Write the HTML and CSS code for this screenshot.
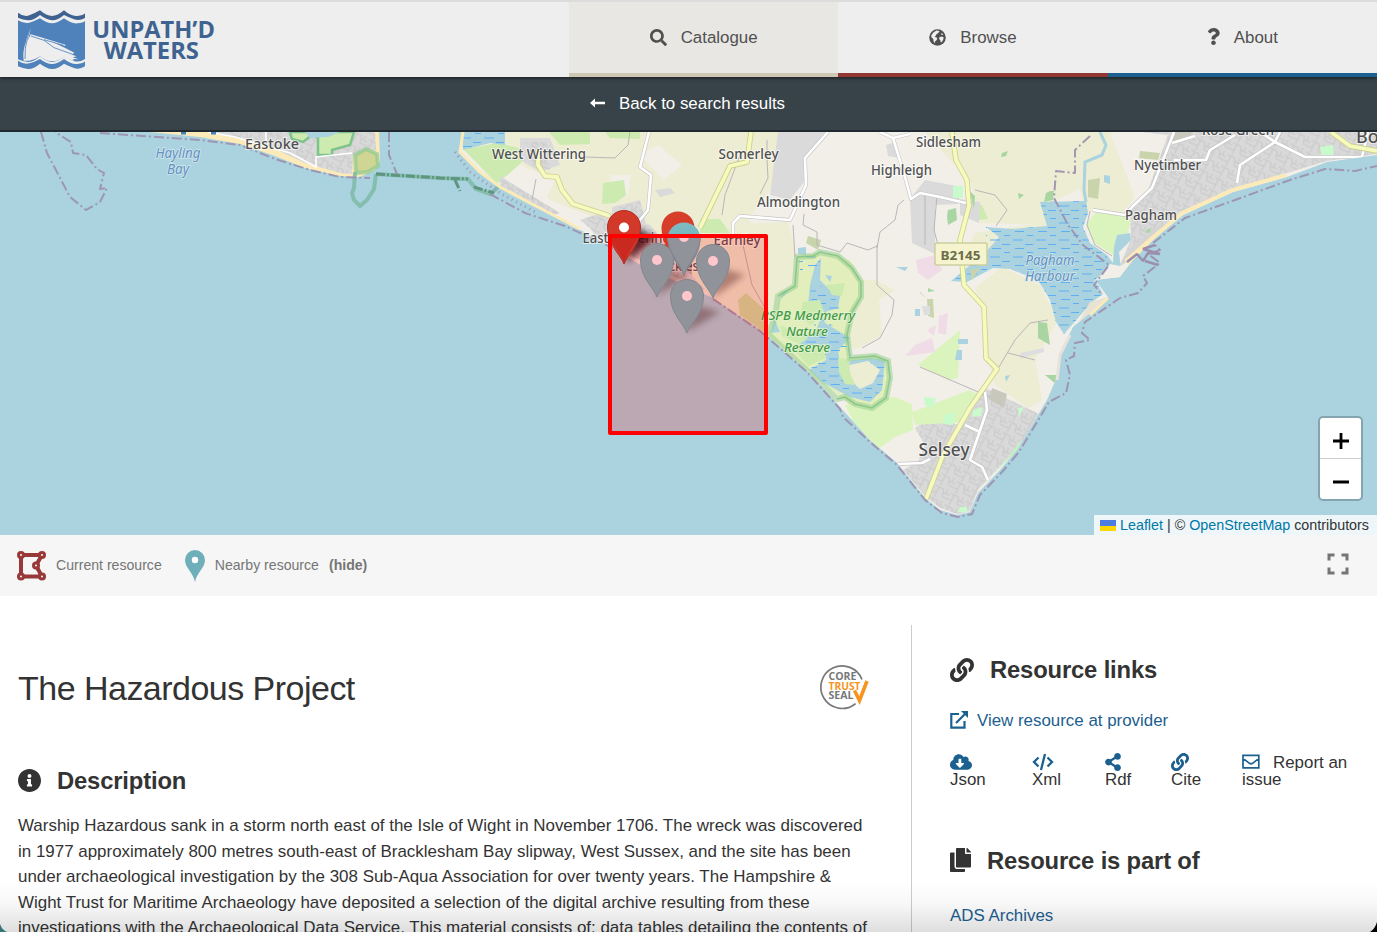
FILE: index.html
```html
<!DOCTYPE html>
<html lang="en">
<head>
<meta charset="utf-8">
<title>The Hazardous Project - Unpath'd Waters</title>
<link rel="stylesheet" href="styles.css">
</head>
<body>
<header class="topbar">
  <a class="logo">
    <svg width="222" height="77" viewBox="0 0 666 231">
      <path fill="#3f6391" d="M54 38Q72 52 88 46T120 31Q140 48 156 48T192 31Q214 50 232 48T255 40V54Q238 64 222 58T192 45Q172 62 156 61T120 45Q100 62 84 61T54 53Z"/>
      <path fill="#4f81bb" d="M54 61Q72 72 88 68T120 55Q140 70 156 70T192 55Q214 72 232 70T255 63V177Q238 188 222 183T192 169Q172 187 156 186T120 169Q100 187 84 186T54 178Z"/>
      <path fill="#eee" d="M93 86Q84 98 78 125Q67 155 71 182H88Q108 178 120 169Q138 184 156 184T192 170Q206 180 222 182L219 177L236 178L218 172L230 169L216 164L223 158L197 145L160 127L196 138V134L130 114L92 103L83 122Z"/>
      <path class="line" stroke="#4f81bb" stroke-width="2.500" d="M92 90Q86 98 83 112Q73 145 75 177M92 108L132 121L162 143L218 163M132 119L190 136"/>
      <path fill="#4f81bb" d="M54 182Q72 194 88 190T120 177Q140 192 156 192T192 177Q214 194 232 192T255 184V199Q238 210 222 204T192 191Q172 208 156 207T120 191Q100 208 84 207T54 199Z"/>
      <text class="logo-text" x="277" y="113" textLength="368" lengthAdjust="spacingAndGlyphs">UNPATH’D</text>
      <text class="logo-text" x="311" y="177" textLength="286" lengthAdjust="spacingAndGlyphs">WATERS</text>
    </svg>
  </a>
  <nav class="nav">
    <a class="nav-item catalogue"><svg width="17" height="17" viewBox="0 0 512 512"><path d="M505 442.700L405.300 343c-4.500-4.500-10.600-7-17-7H372c27.600-35.300 44-79.700 44-128C416 93.100 322.900 0 208 0S0 93.100 0 208s93.100 208 208 208c48.300 0 92.700-16.400 128-44v16.300c0 6.400 2.500 12.500 7 17l99.700 99.700c9.400 9.400 24.600 9.400 33.900 0l28.300-28.300c9.400-9.400 9.400-24.600.1-34zM208 336c-70.700 0-128-57.200-128-128 0-70.700 57.200-128 128-128 70.700 0 128 57.200 128 128 0 70.700-57.200 128-128 128z"/></svg><span>Catalogue</span></a>
    <a class="nav-item browse"><svg width="17" height="17" viewBox="0 0 17 17"><circle cx="8.500" cy="8.500" r="8.300"/><path class="continent" d="M7.500 1.600L10.500 1.900 9.300 4 7.400 5.200 6.800 6.800 5.600 7.400 8.200 9 7.800 11 6.200 12.200 5.600 14.400 4.500 12 4.300 10 2.400 8.300 2.300 6.200 4.600 3.200ZM10.200 8.500L12.200 7.400 14.600 8.300 14.300 10.500 12.700 13.300 11.600 13 11.300 11 10.200 10.200ZM12.200 4.200L13.400 4.500 14.200 6 12.600 6.100Z"/></svg><span>Browse</span></a>
    <a class="nav-item about"><svg width="13" height="17" viewBox="0 0 384 512"><path d="M202.021 0C122.202 0 70.503 32.703 29.914 91.026c-7.363 10.580-5.093 25.086 5.178 32.874l43.138 32.709c10.373 7.865 25.132 6.026 33.253-4.148 25.049-31.381 43.630-49.449 82.757-49.449 30.764 0 68.816 19.799 68.816 49.631 0 22.552-18.617 34.134-48.993 51.164-35.423 19.860-82.299 44.576-82.299 106.405V320c0 13.255 10.745 24 24 24h72.471c13.255 0 24-10.745 24-24v-5.773c0-42.860 125.268-44.645 125.268-160.627C377.504 66.256 286.902 0 202.021 0zM192 373.459c-38.196 0-69.271 31.075-69.271 69.271 0 38.195 31.075 69.270 69.271 69.270s69.271-31.075 69.271-69.271-31.075-69.270-69.271-69.270z"/></svg><span>About</span></a>
  </nav>
</header>
<div class="backbar"><svg width="15" height="10" viewBox="0 0 15 10"><path d="M0 5L5 .5V3.700H15V6.300H5V9.500Z"/></svg><span>Back to search results</span></div>

<section class="map">
<svg class="map-canvas" width="1377" height="403" viewBox="0 132 1377 403">
  <defs>
    <pattern id="streets" width="17" height="13" patternUnits="userSpaceOnUse" patternTransform="rotate(28)"><rect width="17" height="13" fill="#dad9d9"/><path d="M0 2H9L11 9H17M4 2V13M10 5H17M13 0V5M0 9L4 8" stroke="#c9c7c8" stroke-width="1" class="line"/></pattern>
    <pattern id="marsh" width="23" height="17" patternUnits="userSpaceOnUse"><path d="M1 2h10M13 6.500h8M3 10.500h9M15 14.500h6" stroke="#5fb0f2" stroke-width="1.200"/></pattern>
    <linearGradient id="pinTeal" x1="0" y1="0" x2="0" y2="1"><stop offset="0" stop-color="#7fbcc3"/><stop offset="1" stop-color="#62a4b4"/></linearGradient>
    <filter id="soft"><feGaussianBlur stdDeviation="3"/></filter>
    <g id="pin"><path d="M0 37C-3 28-16.500 18-16.500 0A16.500 16.500 0 0 1 16.500 0C16.500 18 3 28 0 37Z"/></g>
    <clipPath id="mainland"><path d="M463 132L460 152 480 172 500 187 530 203 575 227 613 248 642 266 673 280 713 298 760 330 807 370 840 407 870 440 897 463 925 498 940 510 957 515 970 512 978 493 1000 470 1017 450 1047 400 1057 377 1060 353 1073 327 1090 313 1108 297 1095 280 1120 277 1133 260 1153 240 1183 215 1233 192 1287 177 1327 162 1377 155V132Z"/></clipPath>
  </defs>
  <rect y="132" width="1377" height="403" fill="#aad3df"/>

  <!-- Hayling Island -->
  <path fill="#fceab8" d="M150 132L200 137 240 144 275 156 305 168 340 176 360 177 375 170 380 161 379 132Z"/>
  <path fill="url(#streets)" d="M208 132L240 139 275 149 305 163 340 173 352 174 353 155 376 150 375 132Z"/>
  <path fill="#cdebb0" stroke="#7fc38c" stroke-width="2.500" d="M290 132L292 139 303 142 312 135 318 138V155H332V150L350 145 354 132Z"/>
  <path fill="#aad3df" d="M305 132L310 138 328 137 340 132Z"/>
  <path fill="#cfd694" stroke="#8fc98e" stroke-width="4" stroke-opacity=".7" d="M355 155L366 149 377 154 378 166 368 172 356 173Z"/>
  <g class="line" stroke="#fff" stroke-width="1.600"><path d="M208 132L235 137 262 145 290 153 316 167V157L352 153M266 132V142"/></g>
  <path class="line" stroke="#7ab9a1" stroke-width="4" opacity=".8" d="M355 172L354 188 352 193 354 200 360 206 367 200 374 189 376 174M376 174L440 178 468 179 476 189 490 194 495 190 528 156 548 147 563 132"/>
  <path d="M376 174L440 178 468 179M455 180L460 191M474 187L494 193" stroke="#5f957f" stroke-width="3" stroke-dasharray="9 2 2 2" class="line"/>

  <!-- Manhood peninsula -->
  <g clip-path="url(#mainland)">
    <rect x="455" y="132" width="922" height="400" fill="#f2efe9"/>
    <path fill="#ecedd3" d="M490 132H785L770 190 748 220 764 235 767 332 713 298 650 250 590 230 545 200 555 180 520 165 500 150Z"/>
    <path fill="#ecedd3" d="M545 132H675L660 155 635 168 610 163 545 155ZM700 175L740 150 785 150 773 188 740 210ZM740 224L788 222 798 260 780 290 757 280ZM846 183L871 186 868 198 852 196ZM765 262L838 252 855 280 875 280 895 290 879 300 882 335 855 350 830 330 770 345ZM925 132H1110L1102 178 1050 203 1048 225 980 223 972 185ZM975 233L1048 222 1045 226 1000 235 980 262 965 255ZM975 288L1002 267 1040 285 1058 320 1035 360 1042 400 1028 408 995 385 990 365 982 310ZM1040 132H1110L1135 198 1120 215 1085 211 1074 165Z"/>
    <path fill="#f2efe9" d="M505 175L535 180 550 200 600 220 590 230 545 212ZM610 175L631 175 628 195 615 190ZM640 155L658 145 682 165 664 180ZM787 180L840 150 900 190 880 245 800 238Z"/>
    <path fill="#cdebb0" d="M463 149L475 147 497 143 528 150 520 164 497 184ZM603 183L624 180 626 195 615 203 602 204ZM700 219L720 219 730 233H700ZM975 203L982 205 988 219 978 220ZM549 132H590V144L560 145ZM605 132H640V139L610 138Z"/>
    <path fill="#aad3df" d="M462 132H505V145L490 143 463 150Z"/><path fill="url(#marsh)" d="M462 132H505V145L490 143 463 150Z"/>
    <g fill="#dadada"><path d="M778 132H830L807 158 804 182 790 200 770 195ZM910 199L925 180 962 187 958 204 935 205V254L912 243ZM960 199L980 202 979 223 960 215ZM520 138H550L560 165 540 172 520 160ZM612 207L640 200 646 225 625 233 612 230ZM585 218L610 214 625 240 595 236ZM655 190L670 188 675 193 660 197ZM886 145L895 142 900 158 888 156Z"/></g>
    <g fill="url(#streets)"><path d="M525 142H547L550 170 533 165ZM500 176L560 213 550 216 500 190ZM580 220L605 212 650 225 680 262 705 290 660 270 610 245ZM615 208L640 201 646 224 625 231Z"/>
      <path d="M1142 132H1377V154L1327 161 1287 173 1233 189 1183 211 1120 265 1131 239 1130 208 1147 193 1168 135Z"/>
      <path d="M915 428L930 418 960 425 985 388 1037 413 1042 420 1010 455 978 490 970 511 957 514 940 508 925 496 903 470 918 462 925 445Z"/></g>
    <path fill="#d4d5d3" d="M1128 250L1160 225 1165 229 1118 270Z"/>
    <path class="line" stroke="#fceab8" stroke-width="8" d="M1127 263L1153 240 1183 215 1233 192 1287 177"/>
    <!-- golf and grass -->
    <path fill="#dbf4be" d="M845 405L870 400 895 397 912 404 913 430 895 437 877 450 855 425ZM918 365L960 330 958 378 948 380ZM912 412L970 390 980 396 965 422 915 425ZM1095 213H1120L1131 220 1125 245 1113 255 1095 243 1086 225Z"/>
    <path fill="#c4efc0" d="M1022 438L1018 450 990 477 1010 455Z"/>
    <!-- Medmerry reserve -->
    <path fill="#e2eebb" d="M797 256L820 253 850 260 861 280 862 295 852 315 847 345 848 358 875 355 888 360 890 375 886 398 870 408 850 405 840 396 810 375 768 334 775 318 780 292 795 286Z"/>
    <g fill="#aad3df"><path d="M815 265L821 258 820 280 828 288 840 296 838 308 822 313 825 323 850 338 838 350 840 362 870 358 885 360 882 390 870 402 850 397 822 382 809 370 826 360 825 345 802 345 785 335 815 334 820 320 808 305 810 285ZM774 318L780 332 771 333ZM783 292L790 289 780 300ZM825 275L832 276 830 282ZM798 248L806 247 806 255 798 254Z"/></g>
    <path fill="url(#marsh)" d="M810 285L830 288 840 308 825 320 850 338 840 362 885 360 882 390 870 402 825 383 809 370 826 355 790 340 785 335 815 334ZM797 256H820V270H800Z"/>
    <path fill="#ecedd3" d="M849 365L868 361 880 370 873 383 860 389 850 380Z"/>
    <path fill="#cdebb0" d="M803 302L820 300 825 315 810 325 800 315ZM826 285L845 283 842 296 832 295ZM780 325L808 338 800 344 782 336ZM838 358L850 359 849 370 855 385 845 384 839 372ZM790 345L822 348 826 358 808 366Z"/>
    <path class="line" stroke="#97cf92" stroke-width="6" opacity=".55" d="M797 257L813 256 820 252 838 256 852 268 861 282 861 297 852 312 847 335 850 358 875 356 888 361 890 378 886 398 872 408 855 404 845 397 837 399 768 334 775 318 778 296 795 286Z"/>
    <path class="line" stroke="#6fbb76" stroke-width="1.600" opacity=".6" d="M797 257L813 256 820 252 838 256 852 268 861 282 861 297 852 312 847 335 850 358 875 356 888 361 890 378 886 398 872 408 855 404 845 397 837 399M778 296L795 286 797 257"/>
    <path d="M708 235L744 245 750 330 713 298 680 260Z" fill="#ecedd3"/>
    <path d="M738 300L746 293 765 310V333L740 315Z" fill="#cfe2a4"/>
    <!-- Pagham Harbour -->
    <path fill="#aad3df" d="M986 227L1013 229 1047 226 1040 202 1086 201 1088 213 1083 227 1090 243 1107 255 1113 263 1114 247 1117 235 1130 233 1131 240 1119 252 1121 268 1112 266 1095 280 1103 294 1092 302 1078 318 1064 334 1056 322 1050 300 1038 280 1010 269 993 268 967 282 951 281 986 252 999 237Z"/>
    <path fill="url(#marsh)" d="M986 227L1013 229 1047 226 1040 202 1086 201 1088 213 1083 227 1090 243 1107 255 1108 266 1095 280 1103 294 1092 302 1078 318 1064 334 1056 322 1050 300 1038 280 1010 269 993 268 967 282 951 281 986 252Z"/>
    <path fill="#f2efe9" d="M1094 281L1102 278 1110 264 1120 266 1127 262 1120 278 1104 291Z"/>
    <path class="line" stroke="#aad3df" stroke-width="3" d="M1100 132L1106 145 1102 155 1085 162 1084 190 1086 202"/>
    <path fill="#e8e2d4" d="M1108 297L1090 302 1080 320 1065 345 1055 378 1065 370 1075 330Z"/>
    <!-- ponds, woods, small fields -->
    <g fill="#a9d5a2"><path d="M948 210L956 208 957 220 948 225 947 216ZM1038 322L1047 323 1050 345 1038 338ZM1050 191H1054L1053 200 1044 202 1046 193ZM1045 375H1056V384ZM1002 153L1008 151 1006 156 1001 157ZM1018 193L1024 195 1019 199ZM920 292L927 299 920 293ZM928 288L935 291 928 292ZM969 190L975 196 974 209ZM1146 230L1152 228 1148 234Z"/></g>
    <g fill="#efdce6"><path d="M916 260L935 255 942 270 928 280 918 273ZM915 345L932 338 935 352 905 356ZM939 316L948 313 946 335 938 333ZM927 330L936 325 934 336Z"/></g>
    <g fill="#aad3df"><path d="M958 339H968V344H958ZM957 350H962V360H955ZM896 267L908 267 905 271ZM1005 376L1010 375 1006 382ZM1104 175L1110 176 1110 184 1104 182ZM915 309H920V316H915Z"/></g>
    <g fill="#c8facc"><path d="M953 186H963V198H953ZM924 397L936 398 932 408 925 405ZM944 415L955 413 953 425 943 424ZM973 410L983 407 981 416 972 417ZM1018 408L1024 407 1019 417ZM1320 147L1333 145 1334 156 1322 158ZM960 507H967V512H958Z"/></g>
    <path fill="#c9d3ac" d="M1088 180L1100 178 1098 199 1088 197ZM808 236L821 240 818 250 806 243ZM927 299H933L934 318 928 316ZM970 270L980 268 972 280ZM1140 151L1160 153 1158 160 1139 158Z"/>
    <path fill="#c9c8bc" d="M992 388L1007 394 1004 408 989 399ZM1173 132H1193L1185 142 1173 141Z"/>
    <path fill="#dddedf" d="M1020 353L1044 348V352L1021 358ZM922 306H930V315H924Z"/>
    <!-- lanes -->
    <g class="line" stroke="#b9b6b6" stroke-width="1"><path d="M585 157L615 158 628 145 630 132M767 140V160L768 178 760 194M740 155L725 195 722 215M804 214L803 225 817 232 817 245 840 252 847 243 868 250 877 246M877 248L880 232 895 220 898 205 904 200M877 245L877 285 894 300 892 315 880 338 862 348M793 225L795 257M975 190L995 195 1007 210 996 226M920 367L990 397M996 372L1015 340 1030 323 1048 320M1008 353L1035 360M925 194V245M937 195L934 230 938 245M743 245L752 285 765 308M536 179L532 200M1090 211L1087 225 1095 245 1112 256"/></g>
    <g class="line" stroke="#c6c5c5" stroke-width="3.800" stroke-linejoin="round"><path d="M649 132L640 167 651 175 648 210 632 230M828 132L805 158 806 185 790 220 740 216 733 223V234M880 132L893 138 905 177 911 199 920 193 940 197 966 203M893 138L910 134M1174 132L1152 188 1133 206 1125 215 1093 210M1172 143L1195 136M1174 160H1206L1210 150 1235 135M1237 183L1240 165 1275 142 1260 132M1275 142L1305 157 1362 157 1368 132M1275 142L1280 132M985 392L987 410 970 460 982 467 988 480M965 425L980 432M898 464L922 463 930 459"/></g>
    <path class="line" stroke="#fff" stroke-width="2.600" stroke-linejoin="round" d="M649 132L640 167 651 175 648 210 632 230M828 132L805 158 806 185 790 220 740 216 733 223V234M880 132L893 138 905 177 911 199 920 193 940 197 966 203M893 138L910 134M1174 132L1152 188 1133 206 1125 215 1093 210M1172 143L1195 136M1174 160H1206L1210 150 1235 135M1237 183L1240 165 1275 142 1260 132M1275 142L1305 157 1362 157 1368 132M1275 142L1280 132M985 392L987 410 970 460 982 467 988 480M965 425L980 432M898 464L922 463 930 459"/>
    <g class="line" stroke-linejoin="round"><path stroke="#ccd08e" stroke-width="5.500" d="M538 150V165L545 176 557 177 562 190 573 204 610 216M751 132L747 162 730 166 700 228M952 132L956 160 967 180 969 206 960 240 964 285 984 307 986 358 997 369 970 408 943 455 926 499M1331 132L1350 146 1377 151"/><path stroke="#f7fabf" stroke-width="3.800" d="M538 150V165L545 176 557 177 562 190 573 204 610 216M751 132L747 162 730 166 700 228M952 132L956 160 967 180 969 206 960 240 964 285 984 307 986 358 997 369 970 408 943 455 926 499M1331 132L1350 146 1377 151"/></g>
  </g>
  <!-- beach fringes -->
  <g class="line"><path stroke="#fceab8" stroke-width="3" d="M463 132L460 152 480 172 500 187 530 203 580 229M1108 298L1090 315"/>
  <path stroke="#9a9ab5" stroke-width="3" stroke-dasharray="1 4" d="M455 152L470 172 500 193 535 212"/>
  <path stroke="#e7e2db" stroke-width="3" d="M1070 335L1060 355 1057 380"/></g>
  <!-- boundary lines -->
  <g class="line" stroke="#9c8fae" stroke-width="2" stroke-dasharray="10 3 2 3" stroke-linejoin="round" opacity=".9">
    <path d="M41 132L47 153 70 197 86 210 100 202 107 188 100 189 104 173 97 169 86 155 73 153 71 142 55 132M100 133L200 140 240 145 275 159 310 170 340 177 370 178M389 132V155L397 174"/>
    <path d="M490 194L525 213 565 226 613 248M713 299L760 331 807 372 840 409 843 417 870 442 897 465 925 500 942 513 958 517 972 514 980 495 1002 472 1019 452 1049 402 1066 393 1070 375 1066 360 1074 356 1075 343 1090 340 1082 333 1085 322 1120 298 1138 293 1147 283 1143 276 1160 263 1148 254 1160 250 1153 243 1185 218 1235 200 1290 180 1325 169 1355 171 1377 166"/>
    <path d="M1090 136L1075 150V173L1056 171 1054 198 1068 225 1083 245 1109 265 1094 285 1102 295"/>
  </g>
  <path class="line" stroke="#9c8fae" stroke-width="2.500" stroke-linejoin="bevel" d="M1127 262L1137 254 1143 261 1148 253 1160 254 1143 249 1155 245M1145 261L1158 265"/>
  <path class="line" stroke="#4280b8" stroke-width="3" d="M181 133h5M211 133h5"/>

  <g class="place" text-anchor="middle">
    <text x="272" y="149" textLength="54" lengthAdjust="spacingAndGlyphs">Eastoke</text>
    <text x="539" y="159" textLength="94" lengthAdjust="spacingAndGlyphs">West Wittering</text>
    <text x="748.500" y="159" textLength="60" lengthAdjust="spacingAndGlyphs">Somerley</text>
    <text x="798.500" y="207" textLength="83" lengthAdjust="spacingAndGlyphs">Almodington</text>
    <text x="901.500" y="175" textLength="61" lengthAdjust="spacingAndGlyphs">Highleigh</text>
    <text x="948.500" y="147" textLength="65" lengthAdjust="spacingAndGlyphs">Sidlesham</text>
    <text x="1167.500" y="170" textLength="67" lengthAdjust="spacingAndGlyphs">Nyetimber</text>
    <text x="1151" y="220" textLength="52" lengthAdjust="spacingAndGlyphs">Pagham</text>
    <text x="1238" y="135" textLength="72" lengthAdjust="spacingAndGlyphs">Rose Green</text>
    <text x="626.500" y="243" textLength="88" lengthAdjust="spacingAndGlyphs">East Wittering</text>
    <text x="737" y="245" textLength="47" lengthAdjust="spacingAndGlyphs">Earnley</text>
    <text x="687" y="271" textLength="77" lengthAdjust="spacingAndGlyphs">Bracklesham</text>
    <text class="town" x="944" y="456" textLength="51" lengthAdjust="spacingAndGlyphs">Selsey</text>
    <text class="town" x="1356" y="143" text-anchor="start">Bognor</text>
  </g>
  <g class="water" text-anchor="middle"><text x="178" y="158" textLength="45" lengthAdjust="spacingAndGlyphs">Hayling</text><text x="178" y="174">Bay</text><text x="1050" y="265" textLength="49" lengthAdjust="spacingAndGlyphs">Pagham</text><text x="1050" y="281" textLength="50" lengthAdjust="spacingAndGlyphs">Harbour</text></g>
  <g class="reserve" text-anchor="middle"><text x="808" y="320" textLength="94" lengthAdjust="spacingAndGlyphs">RSPB Medmerry</text><text x="807" y="336">Nature</text><text x="807" y="352">Reserve</text></g>
  <rect x="935" y="243" width="52" height="22" rx="2" fill="#f5f4cf" stroke="#ccd0a0" stroke-width="1.500"/>
  <text class="shield" x="960.500" y="260" text-anchor="middle" textLength="40" lengthAdjust="spacingAndGlyphs">B2145</text>

  <!-- markers -->
  <g fill="#241014" opacity=".85" filter="url(#soft)"><path d="M626 263L636 228 656 238Z"/></g>
  <g fill="#202020" opacity=".38" filter="url(#soft)"><path d="M657 296L668 270 690 275ZM713 298L722 268 745 275ZM687 332L696 305 720 312Z"/></g>
  <use href="#pin" x="678" y="228" fill="#d63e2a"/>
  <path d="M668 238H692V275L685 270Z" fill="#333" opacity=".25"/>
  <use href="#pin" x="684" y="239" fill="url(#pinTeal)"/><circle cx="684" cy="239" r="5" fill="#fff"/>
  <path d="M610 236H766V433H610Z" fill="#f00" fill-opacity=".2"/>
  <g fill="#90939a" stroke="#83868e"><use href="#pin" x="657" y="260"/><use href="#pin" x="713" y="261"/><use href="#pin" x="687" y="296"/><path d="M667.500 237H700.500C699 255 687 263 684 276C681 263 669 255 667.500 237Z"/></g>
  <g fill="#ffc7cb"><circle cx="657" cy="260" r="5"/><circle cx="713" cy="261" r="5"/><circle cx="687" cy="296" r="5"/><path d="M679 237H689A5 5 0 0 1 679 237Z"/></g>
  <use href="#pin" x="624" y="227" fill="#d33928" stroke="#ae2d26"/><path d="M610 237H638C632 249 626 254 624 264C622 254 615 249 610 237Z" fill="#c9291e"/><circle cx="624" cy="227.500" r="5" fill="#fff"/>
  <rect x="610" y="236" width="156" height="197" class="line" stroke="#f00" stroke-width="4" stroke-linejoin="round"/>
</svg>
<div class="zoom"><a><svg width="18" height="18" viewBox="0 0 18 18"><path d="M1 9H17M9 1V17"/></svg></a><a><svg width="18" height="18" viewBox="0 0 18 18"><path d="M1 9H17"/></svg></a></div>
<div class="attribution"><svg width="16" height="11" viewBox="0 0 16 11"><path fill="#4c7be1" d="M0 0h16v6H0z"/><path fill="#ffd500" d="M0 6h16v5H0z"/></svg><span><a>Leaflet</a> | © <a>OpenStreetMap</a> contributors</span></div>
</section>

<section class="legend">
  <svg width="30" height="30" viewBox="0 0 30 30" stroke="#993838"><path class="line" stroke-width="4" d="M4 4H25L19 14.500L25 25.500H4Z"/><g fill="#f6f6f6" stroke-width="3"><circle cx="4" cy="4" r="2.500"/><circle cx="25" cy="4" r="2.500"/><circle cx="19" cy="14.500" r="2.500"/><circle cx="25" cy="25.500" r="2.500"/><circle cx="4" cy="25.500" r="2.500"/></g></svg>
  <span class="current">Current resource</span>
  <svg width="20" height="32" viewBox="0 0 20 32"><path fill="#6fafba" d="M10 32C8 22 0 18 0 10A10 10 0 0 1 20 10C20 18 12 22 10 32Z"/><circle cx="10" cy="10" r="3.200" fill="#fff"/></svg>
  <span class="nearby">Nearby resource</span><b>(hide)</b>
  <svg class="fullscreen" width="22" height="22" viewBox="0 0 22 22"><path d="M2 7.500V2H7.500M14.500 2H20V7.500M20 14.500V20H14.500M7.500 20H2V14.500"/></svg>
</section>

<main class="content">
  <article class="article">
    <div class="title-row"><h1>The Hazardous Project</h1>
      <svg class="seal" width="50" height="48" viewBox="0 0 50 48"><path d="M41 16.500A21.300 21.300 0 1 0 33.500 41.500L34.500 40.500" class="line" stroke="#77787a" stroke-width="1.700"/><text x="7.500" y="17.300" textLength="28" lengthAdjust="spacingAndGlyphs">CORE</text><text class="trust" x="7.500" y="26.500" textLength="32" lengthAdjust="spacingAndGlyphs">TRUST</text><text x="7.500" y="35.600" textLength="25" lengthAdjust="spacingAndGlyphs">SEAL</text><path d="M33.500 27.500L38.500 37.500L46 18" class="line" stroke="#f7941d" stroke-width="3.600"/></svg>
    </div>
    <h2 class="desc-head"><svg width="23" height="23" viewBox="8 8 496 496"><path d="M256 8C119.043 8 8 119.083 8 256c0 136.997 111.043 248 248 248s248-111.003 248-248C504 119.083 392.957 8 256 8zm0 110c23.196 0 42 18.804 42 42s-18.804 42-42 42-42-18.804-42-42 18.804-42 42-42zm56 254c0 6.627-5.373 12-12 12h-88c-6.627 0-12-5.373-12-12v-24c0-6.627 5.373-12 12-12h12v-64h-12c-6.627 0-12-5.373-12-12v-24c0-6.627 5.373-12 12-12h64c6.627 0 12 5.373 12 12v100h12c6.627 0 12 5.373 12 12v24z"/></svg><span>Description</span></h2>
    <p class="body">Warship Hazardous sank in a storm north east of the Isle of Wight in November 1706. The wreck was discovered<br>in 1977 approximately 800 metres south-east of Bracklesham Bay slipway, West Sussex, and the site has been<br>under archaeological investigation by the 308 Sub-Aqua Association for over twenty years. The Hampshire &amp;<br>Wight Trust for Maritime Archaeology have deposited a selection of the digital archive resulting from these<br>investigations with the Archaeological Data Service. This material consists of: data tables detailing the contents of</p>
  </article>
  <aside class="side">
    <h2><svg width="24" height="24" viewBox="0 0 512 512"><path id="chain" d="M326.612 185.391c59.747 59.809 58.927 155.698.36 214.590-.11.12-.24.25-.36.37l-67.200 67.200c-59.270 59.270-155.699 59.262-214.960 0-59.270-59.260-59.270-155.700 0-214.960l37.106-37.106c9.840-9.840 26.786-3.300 27.294 10.606.648 17.722 3.826 35.527 9.690 52.721 1.986 5.822.567 12.262-3.783 16.612l-13.087 13.087c-28.026 28.026-28.905 73.660-1.155 101.960 28.024 28.579 74.086 28.749 102.325.51l67.200-67.190c28.191-28.191 28.073-73.757 0-101.830-3.701-3.694-7.429-6.564-10.341-8.569a16.037 16.037 0 0 1-6.947-12.606c-.396-10.567 3.348-21.456 11.698-29.806l21.054-21.055c5.521-5.521 14.182-6.199 20.584-1.731a152.482 152.482 0 0 1 20.522 17.197zM467.547 44.449c-59.261-59.262-155.690-59.270-214.960 0l-67.200 67.200c-.12.12-.25.25-.36.37-58.566 58.892-59.387 154.781.36 214.590a152.454 152.454 0 0 0 20.521 17.196c6.402 4.468 15.064 3.789 20.584-1.731l21.054-21.055c8.350-8.350 12.094-19.239 11.698-29.806a16.037 16.037 0 0 0-6.947-12.606c-2.912-2.005-6.640-4.875-10.341-8.569-28.073-28.073-28.191-73.639 0-101.830l67.200-67.190c28.239-28.239 74.300-28.069 102.325.51 27.750 28.300 26.872 73.934-1.155 101.960l-13.087 13.087c-4.350 4.350-5.769 10.790-3.783 16.612 5.864 17.194 9.042 34.999 9.690 52.721.509 13.906 17.454 20.446 27.294 10.606l37.106-37.106c59.271-59.259 59.271-155.699.001-214.959z"/></svg><span>Resource links</span></h2>
    <a class="provider"><svg width="18" height="18" viewBox="0 0 18 18"><path class="line" stroke="currentColor" stroke-width="2.200" d="M9 3H1.300V16.700H14.500V10M6 12L15.500 2.500"/><path d="M11 0H18V7Z"/></svg><span>View resource at provider</span></a>
    <div class="tools">
      <div class="json"><svg width="22" height="18" viewBox="0 0 640 512"><path d="M537.600 226.600c4.100-10.700 6.400-22.400 6.400-34.600 0-53-43-96-96-96-19.700 0-38.100 6-53.300 16.200C367 64.200 315.300 32 256 32c-88.400 0-160 71.600-160 160 0 2.700.1 5.400.2 8.100C40.200 219.800 0 273.200 0 336c0 79.500 64.500 144 144 144h368c70.700 0 128-57.300 128-128 0-61.900-44-113.600-102.400-125.400zm-132.900 88.700L299.300 420.700c-6.200 6.200-16.400 6.200-22.600 0L171.300 315.300c-10.100-10.100-2.900-27.300 11.300-27.300H248V176c0-8.800 7.200-16 16-16h48c8.800 0 16 7.200 16 16v112h65.400c14.200 0 21.400 17.200 11.300 27.300z"/></svg><span>Json</span></div>
      <div class="xml"><svg width="22" height="18" viewBox="0 0 22 18"><path class="line" stroke="currentColor" stroke-width="2.300" d="M6.500 4.500L2 9L6.500 13.500M15.500 4.500L20 9L15.500 13.500M13 1L9 17"/></svg><span>Xml</span></div>
      <div class="rdf"><svg width="16" height="18" viewBox="0 0 448 512"><path d="M352 320c-22.608 0-43.387 7.819-59.790 20.895l-102.486-64.054a96.551 96.551 0 0 0 0-41.683l102.486-64.054C308.613 184.181 329.392 192 352 192c53.019 0 96-42.981 96-96S405.019 0 352 0s-96 42.981-96 96c0 7.158.79 14.130 2.276 20.841L155.790 180.895C139.387 167.819 118.608 160 96 160c-53.019 0-96 42.981-96 96s42.981 96 96 96c22.608 0 43.387-7.819 59.790-20.895l102.486 64.054A96.301 96.301 0 0 0 256 416c0 53.019 42.981 96 96 96s96-42.981 96-96-42.981-96-96-96z"/></svg><span>Rdf</span></div>
      <div class="cite"><svg width="18" height="18" viewBox="0 0 512 512"><use href="#chain"/></svg><span>Cite</span></div>
      <div class="report"><svg width="18" height="18" viewBox="0 0 18 18"><path class="line" stroke="currentColor" stroke-width="1.700" d="M1 2.300H16.800V14.800H1ZM1 5.300L7.500 10.300Q9 11.300 10.500 10.300L17 5.300"/></svg><em>Report an</em><span>issue</span></div>
    </div>
    <h2 class="part"><svg width="21" height="24" viewBox="0 0 448 512"><path d="M320 448v40c0 13.255-10.745 24-24 24H24c-13.255 0-24-10.745-24-24V120c0-13.255 10.745-24 24-24h72v296c0 30.879 25.121 56 56 56h168zm0-344V0H152c-13.255 0-24 10.745-24 24v368c0 13.255 10.745 24 24 24h272c13.255 0 24-10.745 24-24V128H344c-13.200 0-24-10.800-24-24zm120.971-31.029L375.029 7.029A24 24 0 0 0 358.059 0H352v96h96v-6.059a24 24 0 0 0-7.029-16.970z"/></svg><span>Resource is part of</span></h2>
    <a class="archives">ADS Archives</a>
  </aside>
</main>
<div class="fade"><svg width="14" height="14" viewBox="0 0 14 14"><path fill="#34757a" d="M0 6Q2 12 7 14H0Z"/></svg><svg width="10" height="14" viewBox="0 0 10 14"><path fill="#000" d="M10 4Q8 11 3 14H10Z"/></svg></div>
</body>
</html>
```
FILE: styles.css
```css
* { box-sizing: border-box; }
html, body { margin: 0; height: 932px; overflow: hidden; }
body { position: relative; background: #fff; color: #333; font: 16.950px/25.500px "Liberation Sans", Arial, sans-serif; display: flex; flex-direction: column; }
svg { display: block; flex: none; fill: currentColor; }
.line { fill: none; }
h1, h2, p { margin: 0; }

.topbar { height: 77px; flex: none; display: flex; background: #eee; box-shadow: inset 0 2px #dcdcdc, 0 1px 4px rgba(0,0,0,.6); position: relative; z-index: 2; }
.logo { width: 569px; }
.logo-text { font: bold 69px "Open Sans", "Noto Sans", sans-serif; fill: #3f6391; }
.nav { flex: 1; display: grid; grid-template-columns: repeat(3, 1fr); color: #505050; font-size: 16.900px; }
.nav-item { display: flex; justify-content: center; align-items: center; gap: 14px; border-bottom: 4px solid; padding-top: 1px; margin-top: 2px; }
.catalogue { background: #e8e7e3; border-color: #cdc7b4; }
.browse { border-color: #933732; }
.about { border-color: #1c6090; }
.nav-item svg { color: #505050; }
.catalogue svg, .browse svg { margin-top: -2px; }
.about svg { margin-top: -3px; }
.continent { fill: #eee; }
.backbar { height: 55px; flex: none; background: #384349; border-bottom: 2px solid #20292f; color: #fff; font-size: 16.900px; display: flex; align-items: center; justify-content: center; gap: 14px; padding-right: 2px; }
.backbar svg { margin-top: -2px; }

.map { height: 403px; flex: none; position: relative; }
.place { font: 500 13.700px "Noto Sans", sans-serif; fill: #505050; stroke: #fff; stroke-opacity: .6; stroke-width: 2px; paint-order: stroke; }
.town { font-size: 18px; }
.water { font: italic 13.500px "Noto Sans", sans-serif; fill: #6391c0; stroke: #d4e8ef; stroke-width: 1.500px; paint-order: stroke; }
.reserve { font: italic 500 13.300px "Noto Sans", sans-serif; fill: #429a43; stroke: #e4f3d6; stroke-width: 1.500px; paint-order: stroke; }
.shield { font: bold 13px "Noto Sans", sans-serif; fill: #6b6d4a; }
.zoom { position: absolute; right: 14px; top: 284px; width: 45px; border: 2px solid #84a5af; border-radius: 5px; background: #fff; overflow: hidden; }
.zoom a { height: 40px; display: flex; align-items: center; justify-content: center; }
.zoom a + a { height: 41px; border-top: 1px solid #ccc; }
.zoom path { stroke: #000; stroke-width: 2.800; }
.zoom a:first-child { padding-top: 6px; }
.zoom a:last-child { padding-top: 5px; }
.attribution { position: absolute; right: 0; bottom: 0; width: 283px; height: 20px; padding-left: 6px; background: rgba(255,255,255,.8); display: flex; align-items: center; gap: 4px; font-size: 14.320px; line-height: 20px; white-space: nowrap; }
.attribution a { color: #0078a8; }

.legend { height: 61px; flex: none; display: flex; align-items: center; background: #f6f6f6; color: #757575; font-size: 14.100px; padding: 0 28px 0 17px; }
.current { margin: 0 23px 0 9px; }
.nearby { margin: 0 10px; }
.fullscreen { margin-left: auto; margin-top: -3px; }
.fullscreen path { fill: none; stroke: #757575; stroke-width: 3; }

.content { flex: 1; min-height: 0; display: flex; padding-top: 29px; overflow: hidden; }
.article { width: 911px; flex: none; padding: 38px 40px 0 18px; }
.title-row { display: flex; justify-content: space-between; height: 50px; }
h1 { font-size: 34px; line-height: 51px; font-weight: 400; letter-spacing: -.520px; }
.seal { overflow: visible; }
.seal text { font: bold 11px "Open Sans", sans-serif; fill: #77787a; }
.seal .trust { fill: #f7941d; }
h2 { display: flex; align-items: center; font-size: 23.800px; line-height: 36px; letter-spacing: -.160px; white-space: nowrap; }
.desc-head { margin-top: 50px; gap: 16px; }
.desc-head svg { margin-top: -2px; }
.body { margin-top: 14px; white-space: nowrap; }
.side { flex: 1; border-left: 1px solid #ccc; padding: 27px 0 0 38px; height: 307px; }
.side h2 { gap: 16px; }
.provider { display: flex; align-items: center; gap: 9px; margin-top: 20px; color: #1c6090; font-size: 16.900px; }
.provider svg { margin-top: -2px; }
.tools { display: flex; margin-top: 19px; line-height: 17px; font-size: 16.900px; }
.tools svg { color: #1c6090; height: 18px; }
.tools span { display: block; }
.json { width: 82px; }
.xml { width: 73px; }
.rdf { width: 66px; }
.cite { width: 71px; }
.report { display: grid; grid-template-columns: 18px auto; column-gap: 13px; align-content: start; }
.report em { font-style: normal; padding-top: 1px; }
.report span { grid-column: 1 / 3; }
.side .part { margin-top: 55px; }
.part svg { margin-top: -2px; }
.archives { display: block; margin-top: 24px; color: #1c6090; font-size: 16.900px; }
.fade { position: absolute; left: 0; right: 0; bottom: 0; height: 50px; display: flex; justify-content: space-between; align-items: flex-end; background: linear-gradient(rgba(0,0,0,0), rgba(0,0,0,.03) 45%, rgba(0,0,0,.13)); z-index: 3; }
```
